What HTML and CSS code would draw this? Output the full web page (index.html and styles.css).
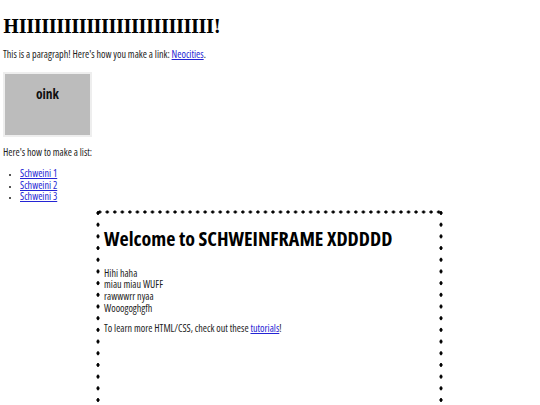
FILE: index.html
```html
<!DOCTYPE html>
<html>
<head>
<meta charset="utf-8">
<title>Schwein</title>
<link rel="stylesheet" href="styles.css">
</head>
<body>
<h1 class="title">HIIIIIIIIIIIIIIIIIIIIIIIIII!</h1>
<p class="text first">This is a paragraph! Here's how you make a link: <a class="link" href="#">Neocities</a>.</p>
<div class="oink">oink</div>
<p class="text second">Here's how to make a list:</p>
<ul class="list">
  <li><a class="link" href="#">Schweini 1</a></li>
  <li><a class="link" href="#">Schweini 2</a></li>
  <li><a class="link" href="#">Schweini 3</a></li>
</ul>
<div class="frame">
  <h2 class="frame-title">Welcome to SCHWEINFRAME XDDDDD</h2>
  <ul class="frame-lines">
    <li>Hihi haha</li>
    <li>miau miau WUFF</li>
    <li>rawwwrr nyaa</li>
    <li>Wooogoghgfh</li>
  </ul>
  <p class="frame-text">To learn more HTML/CSS, check out these <a class="link" href="#">tutorials</a>!</p>
</div>
</body>
</html>
```
FILE: styles.css
```css
html, body {
  margin: 0;
  background: #fff;
}
body {
  padding: 0 3px;
  height: 405px;
  overflow: hidden;
  font-family: "Open Sans", "DejaVu Sans", sans-serif;
  font-stretch: 75%;
  color: #1c1c1c;
}
.title {
  font-family: "DejaVu Serif Condensed", "DejaVu Serif", serif;
  font-weight: bold;
  font-size: 19px;
  line-height: 22px;
  letter-spacing: -0.5px;
  margin: 15px 0 0;
  color: #000;
}
.text {
  font-size: 10.1px;
  line-height: 11.5px;
  margin: 0;
}
.first { margin-top: 11.8px; }
.second { margin-top: 9.8px; }
.link { color: #2424d4; }
.oink {
  width: 85px;
  height: 47.7px;
  padding-top: 13.3px;
  margin-top: 11.7px;
  border: 2px solid #eeeeee;
  background: #bcbcbc;
  text-align: center;
  font-weight: bold;
  font-size: 13.5px;
  line-height: 15px;
  color: #111;
}
.list {
  margin: 10px 0 0;
  padding-left: 17px;
  font-size: 10.1px;
  line-height: 11.5px;
}
.list li::marker {
  font-size: 7px;
}
.frame {
  width: 347px;
  height: 240px;
  margin: 7.7px 0 0 93px;
  padding: 16.7px 8px 0 8px;
  box-sizing: border-box;
  background-image:
    radial-gradient(ellipse 1.8px 1.8px at center, #000 75%, rgba(0,0,0,0) 100%),
    radial-gradient(ellipse 1.8px 2px at center, #000 75%, rgba(0,0,0,0) 100%),
    radial-gradient(ellipse 1.8px 2px at center, #000 75%, rgba(0,0,0,0) 100%);
  background-size: 7.5px 4px, 4px 11.7px, 4px 11.7px;
  background-position: 0 0, 0 -2.85px, 100% -2.85px;
  background-repeat: space no-repeat, no-repeat repeat, no-repeat repeat;
}
.frame-title {
  margin: 0;
  font-size: 20px;
  line-height: 24px;
  font-weight: bold;
  color: #000;
}
.frame-lines {
  list-style: none;
  margin: 16.5px 0 0;
  padding: 0;
  font-size: 10.1px;
  line-height: 11.7px;
}
.frame-text {
  margin: 8.2px 0 0;
  font-size: 10.1px;
  line-height: 11.7px;
}
```
